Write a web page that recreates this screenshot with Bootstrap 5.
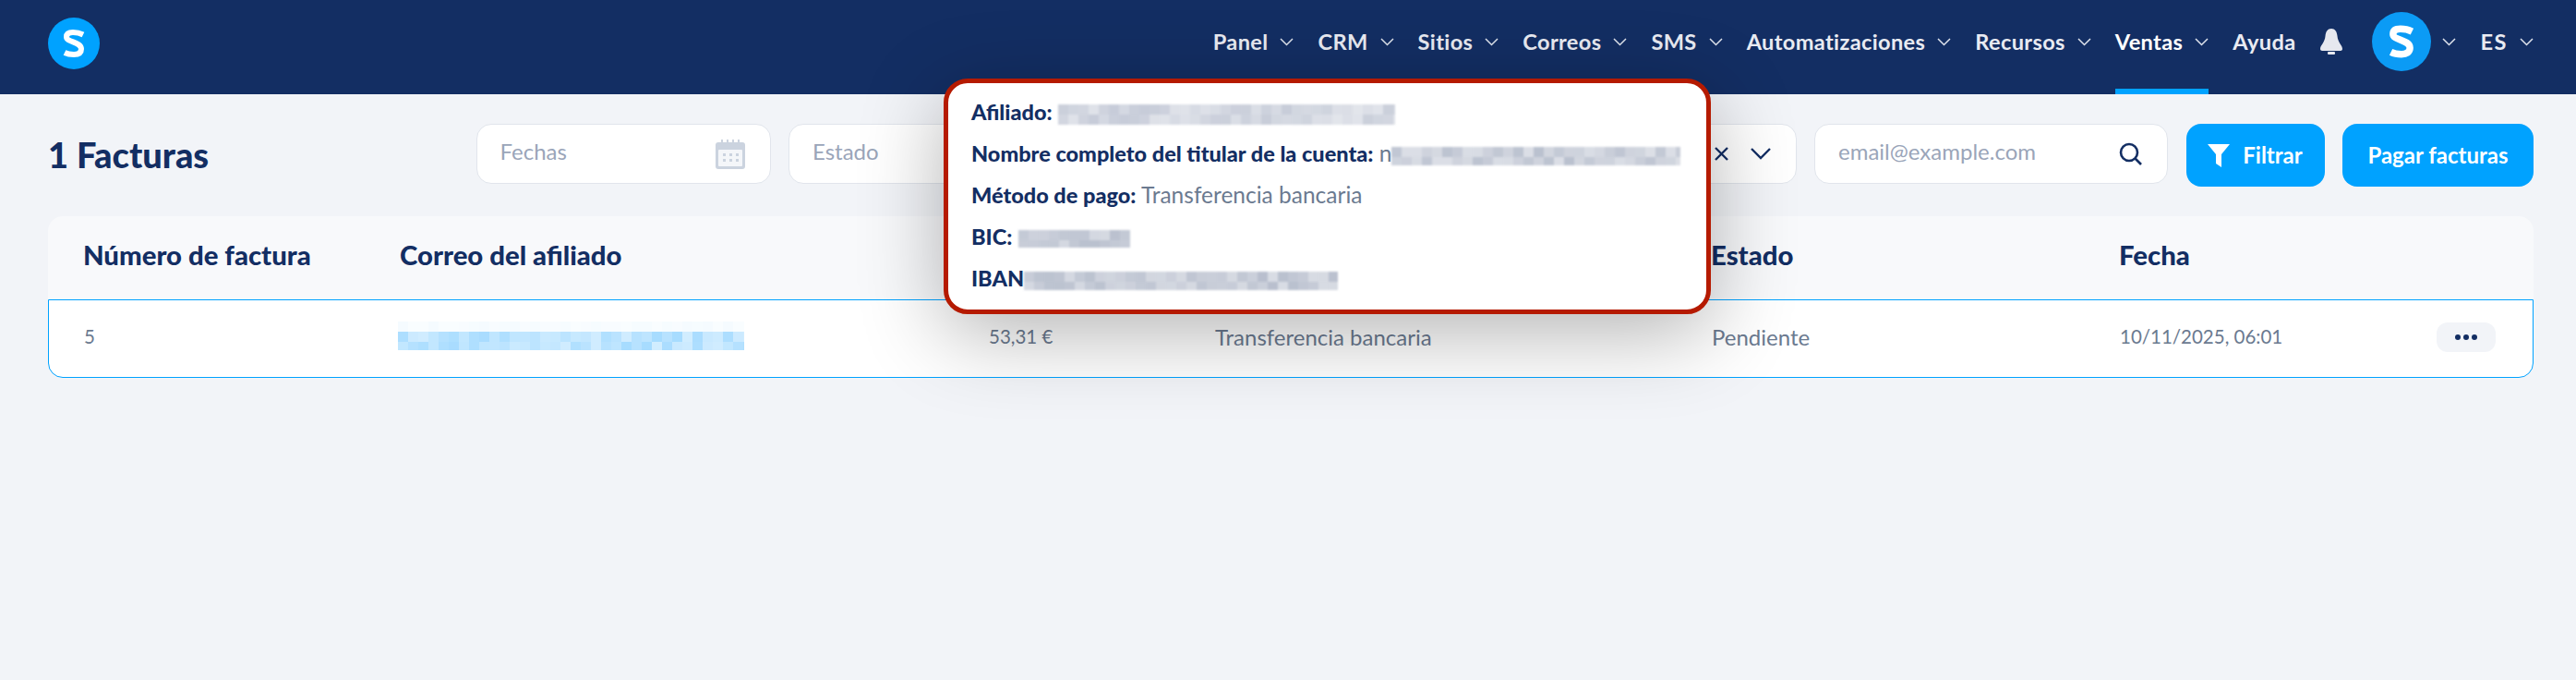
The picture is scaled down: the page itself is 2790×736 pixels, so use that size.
<!DOCTYPE html>
<html lang="es">
<head>
<meta charset="utf-8"/>
<title>Facturas</title>
<link href="https://cdn.jsdelivr.net/npm/bootstrap@5.3.0/dist/css/bootstrap.min.css" rel="stylesheet"/>
<style>
  body { background: #f2f4f8; color: #132e63; font-family: "Lato", "Liberation Sans", sans-serif; min-height: 736px; position: relative; overflow: hidden; }
  .top-bar { background: #132e63; height: 102px; padding: 0 46px 0 52px; }
  .logo-dot { width: 56px; height: 56px; margin-top: -8px; }
  .menu-list { gap: 26px; margin-top: -12px; }
  .menu-item { color: #e9ebf2; font-size: 23.600px; font-weight: 700; gap: 13px; height: 30px; position: relative; letter-spacing: .35px; line-height: 30px; }
  .menu-item.active-item { color: #fff; }
  .menu-item.active-item::after { content: ""; position: absolute; left: 0; right: 0; top: 66px; height: 6px; background: #00a2ff; }
  .chev { width: 15px; height: 9px; fill: none; stroke: #dfe3ec; stroke-width: 1.5; }
  .avatar-group { gap: 12px; margin-left: 5px; }
  .avatar-dot { width: 64px; height: 64px; filter: blur(.6px); }
  .lang-code { letter-spacing: 1.500px; }
  .page-head { padding: 32px 46px 0 52px; }
  .page-title { font-size: 38px; font-weight: 900; margin: 0; }
  .filter-row { gap: 19.500px; }
  .filter-box { height: 65px; background: #fff; border: 1px solid #e1e5ec; border-radius: 16px; padding: 0 27px 0 25px; color: #9aa5b9; font-size: 24px; }
  .hint-text { margin-bottom: 6px; }
  .w-fechas { width: 319px; }
  .w-estado { width: 348px; }
  .w-extra { width: 724px; }
  .w-email { width: 383px; }
  .blue-btn { height: 68px; background: #00a2ff; color: #fff; border: 0; border-radius: 16px; font-size: 24px; font-weight: 700; padding: 0; }
  .blue-btn:hover { background: #00a2ff; color: #fff; }
  .w-filtrar { width: 150px; gap: 14px; }
  .w-pagar { width: 207px; }
  .data-box { margin: 32px 46px 0 52px; }
  .head-row { height: 90px; padding-bottom: 6px; background: #f8f9fb; border-radius: 16px 16px 0 0; font-size: 29.300px; font-weight: 900; }
  .body-row { height: 85px; padding-bottom: 4px; background: #fff; border: 1px solid #00a2ff; border-radius: 0 0 16px 16px; color: #6b7a90; font-size: 24px; }
  .num-text { font-size: 20.500px; }
  .c1 { width: 381px; padding-left: 38px; }
  .c2 { width: 637px; }
  .c3 { width: 245px; }
  .c4 { width: 538px; }
  .c5 { width: 442px; }
  .c6 { flex: 1; }
  .email-blur { margin: -7px 0 0 -3px; }
  .dots-btn { width: 64px; height: 32px; background: #f2f4f8; border-radius: 12px; margin-right: 40px; gap: 3px; }
  .dots-btn i { width: 6px; height: 6px; border-radius: 50%; background: #132e63; }
  .detail-pop { position: absolute; left: 1022px; top: 85px; width: 831px; height: 255px; background: #fff; border: 5px solid #b51a00; border-radius: 26px; box-shadow: 0 20px 90px rgba(0,0,0,.3); padding: 8px 25px; font-size: 24.500px; color: #6b7a90; }
  .detail-line { height: 45px; line-height: 45px; white-space: nowrap; }
  .detail-line b { color: #132e63; font-weight: 900; font-size: 23.500px; }
  .mosaic { display: inline-block; vertical-align: middle; }
  .detail-pop .mosaic { filter: blur(1px); }
</style>
</head>
<body>
<nav class="top-bar d-flex align-items-center justify-content-between">
  <svg class="logo-dot" viewBox="0 0 56 56"><circle cx="28" cy="28" r="28" fill="#00a2ff"/><path d="M38 18.500C34 16.500 30 16 27 16C22 16 20 18 20 21C20 27 36 26 36 34C36 38 33 40 28 40C25 40 21 39.500 18 38" fill="none" stroke="#fff" stroke-width="6"/></svg>
  <div class="menu-list d-flex align-items-center" id="menu"></div>
</nav>
<div class="page-head d-flex align-items-center justify-content-between">
  <h1 class="page-title">1 Facturas</h1>
  <div class="d-flex align-items-start filter-row">
    <div class="filter-box w-fechas d-flex align-items-center justify-content-between">
      <span class="hint-text">Fechas</span>
      <svg width="32" height="32" viewBox="0 0 32 32"><path d="M0 6a3 3 0 0 1 3-3h26a3 3 0 0 1 3 3v23a3 3 0 0 1-3 3H3a3 3 0 0 1-3-3z" fill="#cbd3df"/><rect x="3" y="11" width="26" height="18" rx="1" fill="#f4f6f9"/><path d="M7 0v5M13 0v5M19 0v5M25 0v5" stroke="#cbd3df" stroke-width="2"/><path d="M8 15h3v3H8zM15 15h3v3h-3zM22 15h3v3h-3zM8 21h3v3H8zM15 21h3v3h-3zM22 21h3v3h-3z" fill="#cbd3df"/></svg>
    </div>
    <div class="filter-box w-estado d-flex align-items-center"><span class="hint-text">Estado</span></div>
    <div class="filter-box w-extra d-flex align-items-center justify-content-end">
      <svg class="me-4" width="15" height="15" viewBox="0 0 15 15"><path d="M1 1l13 13M14 1L1 14" stroke="#132e63" stroke-width="2.400"/></svg>
      <svg width="22" height="13" viewBox="0 0 22 13"><path d="M1 1l10 10L21 1" fill="none" stroke="#132e63" stroke-width="2.400"/></svg>
    </div>
    <div class="filter-box w-email d-flex align-items-center justify-content-between">
      <span class="hint-text">email@example.com</span>
      <svg width="25" height="25" viewBox="0 0 25 25"><circle cx="11" cy="11" r="9" fill="none" stroke="#132e63" stroke-width="2.600"/><path d="M17 17l7 7" stroke="#132e63" stroke-width="2.600"/></svg>
    </div>
    <button class="btn blue-btn w-filtrar d-flex align-items-center justify-content-center" type="button">
      <svg width="24" height="25" viewBox="0 0 24 25"><path d="M0 0h24l-9 11v14l-6-4V11z" fill="#fff"/></svg>Filtrar
    </button>
    <button class="btn blue-btn w-pagar" type="button">Pagar facturas</button>
  </div>
</div>
<div class="data-box">
  <div class="head-row d-flex align-items-center">
    <div class="c1">Número de factura</div>
    <div class="c2">Correo del afiliado</div>
    <div class="c3"></div>
    <div class="c4"></div>
    <div class="c5">Estado</div>
    <div class="c6">Fecha</div>
  </div>
  <div class="body-row d-flex align-items-center">
    <div class="c1 num-text">5</div>
    <div class="c2"><span class="mosaic email-blur" data-w="375" data-h="31" data-c="#6cc4ff" data-faint="1"></span></div>
    <div class="c3 text-nowrap num-text">53,31 €</div>
    <div class="c4">Transferencia bancaria</div>
    <div class="c5">Pendiente</div>
    <div class="c6 d-flex align-items-center justify-content-between">
      <span class="num-text">10/11/2025, 06:01</span>
      <span class="dots-btn d-flex align-items-center justify-content-center"><i></i><i></i><i></i></span>
    </div>
  </div>
</div>
<div class="detail-pop">
  <div class="detail-line"><b>Afiliado:</b> <span class="mosaic" data-w="365" data-h="22" data-c="#a0a9be"></span></div>
  <div class="detail-line"><b>Nombre completo del titular de la cuenta:</b> n<span class="mosaic" data-w="313" data-h="20" data-c="#8a95ad"></span></div>
  <div class="detail-line"><b>Método de pago:</b> Transferencia bancaria</div>
  <div class="detail-line"><b>BIC:</b> <span class="mosaic" data-w="121" data-h="19" data-c="#8a95ad"></span></div>
  <div class="detail-line"><b>IBAN</b><span class="mosaic" data-w="340" data-h="20" data-c="#8a95ad"></span></div>
</div>
<script src="https://cdn.jsdelivr.net/npm/bootstrap@5.3.0/dist/js/bootstrap.bundle.min.js"></script>
<script>
const items = [
  { name: 'Panel', chev: true }, { name: 'CRM', chev: true }, { name: 'Sitios', chev: true },
  { name: 'Correos', chev: true }, { name: 'SMS', chev: true }, { name: 'Automatizaciones', chev: true },
  { name: 'Recursos', chev: true }, { name: 'Ventas', chev: true, active: true }, { name: 'Ayuda' }
];
const chevron = '<svg class="chev" viewBox="0 0 15 9"><path d="M1 1l6.500 6.500L14 1"/></svg>';
const menu = document.getElementById('menu');
items.forEach(item => {
  const a = document.createElement('a');
  a.className = 'menu-item d-flex align-items-center text-decoration-none' + (item.active ? ' active-item' : '');
  a.href = '#';
  a.innerHTML = `<span>${item.name}</span>` + (item.chev ? chevron : '');
  menu.appendChild(a);
});
menu.insertAdjacentHTML('beforeend', `
  <svg width="26" height="28" viewBox="0 0 26 28"><path d="M13 0c4 0 6 3 6.500 8 .5 7 5.500 10 5.500 14 0 1-1 2-2 2H3c-1 0-2-1-2-2 0-4 5-7 5.500-14C7 3 9 0 13 0z" fill="#e6e8ef"/><rect x="9" y="25" width="8" height="3" rx="1" fill="#e6e8ef"/></svg>
  <div class="d-flex align-items-center menu-item avatar-group">
    <svg class="avatar-dot" viewBox="0 0 56 56"><circle cx="28" cy="28" r="28" fill="#0b9bf5"/><path d="M38 18.500C34 16.500 30 16 27 16C22 16 20 18 20 21C20 27 36 26 36 34C36 38 33 40 28 40C25 40 21 39.500 18 38" fill="none" stroke="#fff" stroke-width="6.500"/></svg>
    ${chevron}
  </div>
  <a class="menu-item d-flex align-items-center text-decoration-none" href="#"><span class="lang-code">ES</span>${chevron}</a>`);

// pixelated placeholder for the hidden personal data
document.querySelectorAll('.mosaic').forEach((el, n) => {
  const w = +el.dataset.w, h = +el.dataset.h, size = 11;
  let rects = '', seed = 7 + n * 13;
  for (let y = 0; y < h; y += size) {
    for (let x = 0; x < w; x += size) {
      seed = (seed * 137 + 41) % 257;
      let alpha = 0.3 + seed / 257 * 0.3;
      if (el.dataset.faint && y === 0) alpha *= 0.12;
      rects += `<rect x="${x}" y="${y}" width="${size}" height="${size}" fill="${el.dataset.c}" opacity="${alpha.toFixed(2)}"/>`;
    }
  }
  el.innerHTML = `<svg width="${w}" height="${h}" class="d-block">${rects}</svg>`;
});
</script>
</body>
</html>
